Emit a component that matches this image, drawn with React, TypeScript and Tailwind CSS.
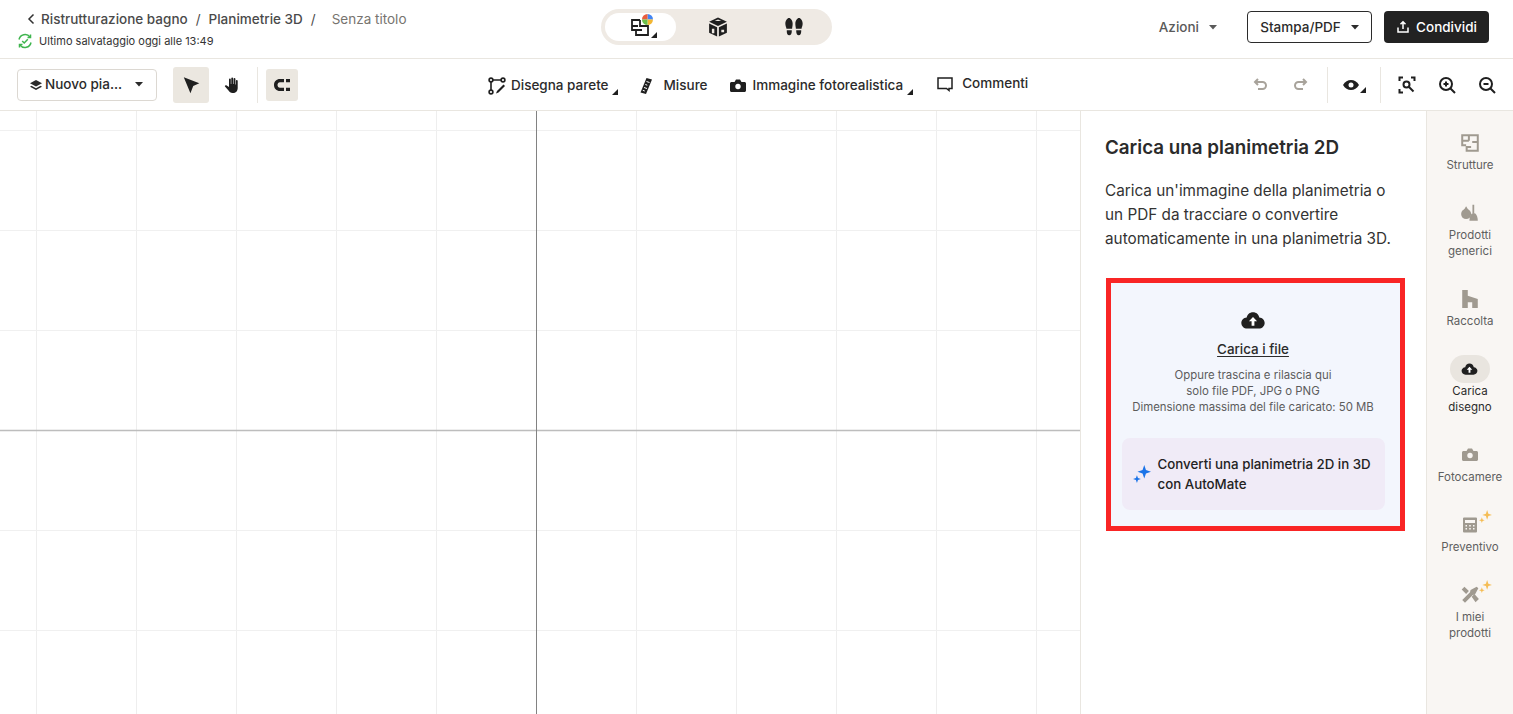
import type { ReactNode } from 'react';

const font = { fontFamily: 'Inter, "Noto Sans", sans-serif' };

function Caret({ className = '' }: { className?: string }) {
  return (
    <svg width="8" height="5" viewBox="0 0 8 5" className={className}>
      <path d="M0 0h8L4 4.5z" fill="currentColor" />
    </svg>
  );
}

function Corner({ className = '' }: { className?: string }) {
  return (
    <svg width="6" height="6" viewBox="0 0 6 6" className={className}>
      <path d="M6 0v6H0z" fill="#1f1f1f" />
    </svg>
  );
}

function Sparkle({ className = '', fill = '#f5bd55', size = 14 }: { className?: string; fill?: string; size?: number }) {
  return (
    <svg width={size} height={size} viewBox="0 0 16 16" className={className}>
      <path d="M10 0l1.500 4.500L16 6l-4.500 1.500L10 12 8.500 7.500 4 6l4.500-1.500z" fill={fill} />
      <path d="M3.500 9l.9 2.600L7 12.500l-2.600.9L3.500 16l-.9-2.600L0 12.500l2.600-.9z" fill={fill} />
    </svg>
  );
}

function CloudUp({ size = 24, fill = '#1f1f1f', arrow = '#fff' }: { size?: number; fill?: string; arrow?: string }) {
  return (
    <svg width={size} height={size} viewBox="0 0 24 24">
      <path
        d="M12 4.500c2.800 0 5 1.900 5.400 4.500 2.600.2 4.600 2.200 4.600 4.700 0 2.600-2.200 4.800-5 4.800H7c-2.800 0-5-2.200-5-4.800 0-2.500 2-4.500 4.600-4.700C7 6.400 9.200 4.500 12 4.500z"
        fill={fill}
      />
      <path d="M12 8.500l3.500 3.800h-2.300V16h-2.400v-3.700H8.500z" fill={arrow} />
    </svg>
  );
}

function PlanIcon() {
  return (
    <svg width="24" height="24" viewBox="0 0 24 24" fill="none" stroke="#1f1f1f" strokeWidth="1.800">
      <path d="M11 5H3v10h4M9 11H3M11 5v6h8v9H7v-5h6" />
    </svg>
  );
}

function ColorDot() {
  return (
    <svg width="11" height="11" viewBox="0 0 10 10" className="absolute left-[13px] -top-px">
      <path d="M5 5V0a5 5 0 0 1 5 5z" fill="#4285f4" />
      <path d="M5 5H0a5 5 0 0 1 5-5z" fill="#ea5d3d" />
      <path d="M5 5h5a5 5 0 0 1-5 5z" fill="#f2b632" />
      <path d="M5 5v5a5 5 0 0 1-5-5z" fill="#6cc04a" />
    </svg>
  );
}

function BoxIcon() {
  return (
    <svg width="20" height="20" viewBox="0 0 18 18">
      <path d="M9 .5l8 3.800L9 8 1 4.300z" fill="#1f1f1f" />
      <path d="M1 5.800L8.200 9.200V17.500L1 14.200zM17 5.800v8.400L9.800 17.500V9.200z" fill="#1f1f1f" />
      <path d="M3.500 10.500h2.200v4.200H3.500zM12 11.500h2.500v2.200H12zM6 3.500l3-1.200 3 1.200" fill="#efeae4" />
    </svg>
  );
}

function StepsIcon() {
  return (
    <svg width="20" height="20" viewBox="0 0 18 18" fill="#1f1f1f">
      <path d="M4.500 1C6 1 7.800 3.500 7.800 6c0 2-.5 3.500-.5 4.500H2.200C2.200 9.500 1.200 8 1.200 6c0-2.500 1.800-5 3.300-5zM2.500 12h4.500c.2 2.800-.7 4.500-2.300 4.500S2.300 14.800 2.500 12z" />
      <path d="M13.500 1c1.500 0 3.300 2.500 3.300 5 0 2-1 3.500-1 4.500h-5.100c0-1-.5-2.500-.5-4.500 0-2.500 1.800-5 3.300-5zM11 12h4.500c.2 2.800-.7 4.500-2.200 4.500S10.800 14.800 11 12z" />
    </svg>
  );
}

function DrawWallIcon() {
  return (
    <svg width="18" height="18" viewBox="0 0 18 18" fill="none" stroke="#1f1f1f" strokeWidth="1.600">
      <circle cx="3" cy="3" r="1.900" />
      <circle cx="15" cy="3" r="1.900" />
      <circle cx="3" cy="15" r="1.900" />
      <path d="M5 3h8M3 5v8" />
      <path d="M15.500 7.500L9 14l-1 2.500 2.500-1L17 9z" fill="#1f1f1f" stroke="none" />
    </svg>
  );
}

function RulerIcon() {
  return (
    <svg width="14" height="18" viewBox="0 0 14 18">
      <path d="M7.500 1L13 2.500 7 17l-5.500-1.500z" fill="#1f1f1f" />
      <path d="M7.500 4.500l3 1M6.300 7.500l2 .7M5 10.500l3 1M3.800 13.300l2 .7" stroke="#fff" strokeWidth="1" />
    </svg>
  );
}

function CameraIcon({ fill = '#1f1f1f', hole = '#fff' }: { fill?: string; hole?: string }) {
  return (
    <svg width="18" height="18" viewBox="0 0 18 18">
      <path d="M2.500 5h3l1.500-2.500h4L12.500 5h3c.8 0 1.500.7 1.500 1.500v7c0 .8-.7 1.500-1.500 1.500h-13C1.700 15 1 14.300 1 13.500v-7C1 5.700 1.700 5 2.500 5z" fill={fill} />
      <circle cx="9" cy="9.500" r="2.700" fill={hole} />
    </svg>
  );
}

function SideItem({ icon, label, active }: { icon: ReactNode; label: ReactNode; active?: boolean }) {
  return (
    <div className={`flex flex-col items-center text-[11.5px] leading-4 text-center ${active ? 'text-[#2b2b2b]' : 'text-[#5f5f5f]'}`}>
      <div className={`relative flex items-center justify-center h-7 w-10 rounded-full ${active ? 'bg-[#e9e5df]' : ''}`}>{icon}</div>
      <div>{label}</div>
    </div>
  );
}

const gridX = [36, 136, 236, 336, 436, 636, 736, 836, 936, 1036];
const gridY = [19, 119, 219, 419, 519];

export default function App() {
  return (
    <div style={font} className="flex flex-col h-[714px] w-[1513px] overflow-hidden bg-white text-[#2b2b2b]">
      {/* Top bar */}
      <header className="flex items-center h-[59px] shrink-0 border-b border-[#e9e6e0] pb-[4px]">
        <div className="w-[601px] shrink-0 pl-[17px] mt-[4px]">
          <div className="flex items-center pl-[10px] h-5 text-[13.5px] font-medium text-[#4a4a4a]">
            <svg width="8" height="12" viewBox="0 0 8 12" fill="none" stroke="#333" strokeWidth="1.500" className="mr-[6px]">
              <path d="M6.500 1.500L2 6l4.500 4.500" />
            </svg>
            <span>Ristrutturazione bagno</span>
            <span className="mx-[8px] font-normal">/</span>
            <span>Planimetrie 3D</span>
            <span className="ml-[8px] font-normal">/</span>
            <span className="ml-[16px] font-normal text-[#77746f]">Senza titolo</span>
          </div>
          <div className="flex items-center mt-[4px] h-4 text-[11px] text-[#333]">
            <svg width="16" height="16" viewBox="0 0 16 16" fill="none" stroke="#3fb54e" strokeWidth="1.500" className="mr-[6px]">
              <path d="M2 6.500A6.200 6.200 0 0 1 13 4M14 9.500A6.200 6.200 0 0 1 3 12" />
              <path d="M13.500 1.500V4.500H10.500M2.500 14.500V11.500H5.500" />
              <path d="M5.200 8l2 2 3.600-3.800" />
            </svg>
            Ultimo salvataggio oggi alle 13:49
          </div>
        </div>
        <div className="flex items-center w-[231px] h-9 rounded-full bg-[#efeae4] p-[4px] shrink-0">
          <div className="flex items-center justify-center w-[71px] h-[28px] rounded-full bg-white">
            <div className="relative w-[24px] h-[24px]">
              <PlanIcon />
              <ColorDot />
              <Corner className="absolute right-[-4px] bottom-[1px]" />
            </div>
          </div>
          <div className="flex items-center justify-center w-[84px]"><BoxIcon /></div>
          <div className="flex items-center justify-center w-[68px]"><StepsIcon /></div>
        </div>
        <div className="flex flex-1 items-center justify-end pr-[24px] text-[13.5px] font-medium">
          <div className="flex items-center text-[#5a5a5a] mr-[30px]">
            Azioni
            <Caret className="ml-[10px]" />
          </div>
          <div className="flex items-center justify-center w-[125px] h-8 rounded-[4px] border border-[#2b2b2b] mr-[12px]">
            Stampa/PDF
            <Caret className="ml-[10px]" />
          </div>
          <div className="flex items-center justify-center w-[105px] h-8 rounded-[4px] bg-[#222] text-white">
            <svg width="14" height="14" viewBox="0 0 14 14" fill="none" stroke="#fff" strokeWidth="1.500" className="mr-[6px]">
              <path d="M7 9V2M4.500 4.200L7 1.800l2.500 2.400M2 7.500V12h10V7.500" />
            </svg>
            Condividi
          </div>
        </div>
      </header>

      {/* Toolbar */}
      <div className="flex items-center h-[52px] shrink-0 border-b border-[#e9e6e0] pl-[17px] pr-[17px]">
        <div className="flex items-center">
          <div className="flex items-center w-[140px] h-8 rounded-[4px] border border-[#dcd8d2] pl-[11px] text-[13.5px] font-medium">
            <svg width="14" height="14" viewBox="0 0 14 14" fill="#2b2b2b" className="mr-[2px]">
              <path d="M7 2l6 3.200L7 8.400 1 5.200z" />
              <path d="M2.500 7.800L7 10.200l4.500-2.400 1.500.9L7 12 1 8.700z" />
            </svg>
            Nuovo pia...
            <Caret className="ml-[13px]" />
          </div>
          <div className="flex items-center justify-center w-9 h-9 rounded-[3px] bg-[#ebe7e0] ml-[16px]">
            <svg width="20" height="20" viewBox="0 0 18 18" fill="#1f1f1f">
              <path d="M2.500 2L16.500 7.500 11 10l-2.500 6.500z" />
            </svg>
          </div>
          <div className="flex items-center justify-center w-9 h-9 ml-[5px]">
            <svg width="18" height="18" viewBox="0 0 18 18" fill="#1f1f1f">
              <path d="M6 3.500a.9.900 0 0 1 1.800 0V8h.5V2.300a.9.900 0 0 1 1.800 0V8h.5V3a.9.900 0 0 1 1.800 0v5.500h.5V5a.9.900 0 0 1 1.800 0v7c0 3-2 5-4.700 5H9.500c-2 0-3-1-4-2.500L2 10.500c-.5-.7.500-1.800 1.300-1.200L6 11z" />
            </svg>
          </div>
          <div className="w-px h-9 bg-[#e9e6e0] ml-[7px]" />
          <div className="flex items-center justify-center w-8 h-8 rounded-[3px] bg-[#ebe7e0] ml-[8px]">
            <svg width="16" height="12" viewBox="0 0 16 12" fill="#1f1f1f">
              <path d="M10 0v3.200H6c-1.500 0-2.500 1.200-2.500 2.800S4.500 8.800 6 8.800h4V12H6C2.500 12 0 9.500 0 6s2.500-6 6-6z" />
              <path d="M12 0h4v3.200h-4zM12 8.800h4V12h-4z" />
            </svg>
          </div>
        </div>

        <div className="flex items-center ml-[190px] mt-[2px] text-[13.5px] font-medium text-[#2b2b2b]">
          <DrawWallIcon />
          <span className="ml-[5px]">Disegna parete</span>
          <Corner className="ml-[3px] mt-[12px]" />
          <span className="ml-[21px]"><RulerIcon /></span>
          <span className="ml-[11px]">Misure</span>
          <span className="ml-[21px]"><CameraIcon /></span>
          <span className="ml-[6px]">Immagine fotorealistica</span>
          <Corner className="ml-[4px] mt-[12px]" />
          <svg width="18" height="18" viewBox="0 0 18 18" fill="none" stroke="#1f1f1f" strokeWidth="1.500" className="ml-[23px] -mt-[4px]">
            <path d="M2 3h14v10.500h-3v2l-2.500-2H2z" />
          </svg>
          <span className="ml-[8px] -mt-[4px]">Commenti</span>
        </div>

        <div className="flex items-center ml-auto">
          <svg width="18" height="18" viewBox="0 0 18 18" fill="none" stroke="#a8a39b" strokeWidth="2">
            <path d="M6 3L3 6l3 3M3 6h7.500a3.500 3.500 0 0 1 0 7H6" />
          </svg>
          <svg width="18" height="18" viewBox="0 0 18 18" fill="none" stroke="#a8a39b" strokeWidth="2" className="ml-[21px]">
            <path d="M12 3l3 3-3 3M15 6H7.500a3.500 3.500 0 0 0 0 7H12" />
          </svg>
          <div className="w-px h-9 bg-[#e9e6e0] ml-[18px]" />
          <div className="relative ml-[14px] mr-[17px]">
            <svg width="18" height="18" viewBox="0 0 18 18">
              <path d="M1 9c2-3.500 4.800-5 8-5s6 1.500 8 5c-2 3.500-4.800 5-8 5s-6-1.500-8-5z" fill="#1f1f1f" />
              <circle cx="9" cy="9" r="2.500" fill="#fff" />
            </svg>
            <Corner className="absolute right-[-6px] bottom-[1px]" />
          </div>
          <div className="w-px h-9 bg-[#e9e6e0] ml-[3px]" />
          <svg width="18" height="18" viewBox="0 0 18 18" fill="none" stroke="#1f1f1f" strokeWidth="2" className="ml-[17px]">
            <path d="M1.500 5V1.500H5M13 1.500h3.500V5M1.500 13v3.500H5" />
            <circle cx="8.500" cy="8.500" r="3" />
            <path d="M11 11l4.500 4.500" />
          </svg>
          <svg width="18" height="18" viewBox="0 0 18 18" fill="none" stroke="#1f1f1f" strokeWidth="2" className="ml-[22px]">
            <circle cx="8" cy="8" r="6" />
            <path d="M12.500 12.500L17 17M5.500 8h5M8 5.500v5" />
          </svg>
          <svg width="18" height="18" viewBox="0 0 18 18" fill="none" stroke="#1f1f1f" strokeWidth="2" className="ml-[22px]">
            <circle cx="8" cy="8" r="6" />
            <path d="M12.500 12.500L17 17M5.500 8h5" />
          </svg>
        </div>
      </div>

      {/* Main */}
      <div className="flex flex-1 min-h-0">
        <div className="w-[1081px] shrink-0 border-r border-[#e9e6e0] overflow-hidden">
          <svg width="1080" height="603" className="block">
            {gridX.map(x => (
              <line key={x} x1={x + 0.5} x2={x + 0.5} y1="0" y2="603" stroke="#eeeeee" />
            ))}
            {gridY.map(y => (
              <line key={y} x1="0" x2="1080" y1={y + 0.5} y2={y + 0.5} stroke="#f0f0f0" strokeWidth="1" />
            ))}
            <line x1="0" x2="1080" y1="319.500" y2="319.500" stroke="#bdbdbd" strokeWidth="1.500" />
            <line x1="536.500" x2="536.500" y1="0" y2="603" stroke="#828282" />
          </svg>
        </div>

        <div className="w-[345px] shrink-0 pl-[24px] pr-[20px] pt-[23px]">
          <h2 className="text-[18.8px] leading-7 font-semibold text-[#2b2b2b] whitespace-nowrap">Carica una planimetria 2D</h2>
          <p className="mt-[17px] text-[15.3px] leading-6 text-[#333] whitespace-nowrap">
            Carica un'immagine della planimetria o
            <br />
            un PDF da tracciare o convertire
            <br />
            automaticamente in una planimetria 3D.
          </p>
          <div className="mt-[27px] w-[299px] h-[253px] border-[5px] border-[#f92525] bg-[#f3f6fd] flex flex-col items-center pt-[24px] pr-[5px] ml-px">
            <CloudUp size={28} />
            <div className="mt-[4px] text-[13.4px] leading-5 font-medium underline underline-offset-2">Carica i file</div>
            <div className="mt-[8px] text-[11.4px] leading-4 text-center text-[#5c5c5c] whitespace-nowrap">
              Oppure trascina e rilascia qui
              <br />
              solo file PDF, JPG o PNG
              <br />
              Dimensione massima del file caricato: 50 MB
            </div>
            <div className="flex items-center mt-[23px] w-[263px] h-[72px] rounded-lg bg-[#f0ebf7] pl-[11px]">
              <Sparkle fill="#1a73e8" size={18} />
              <div className="ml-[7px] text-[13.3px] leading-5 font-medium text-[#222] whitespace-nowrap">
                Converti una planimetria 2D in 3D
                <br />
                con AutoMate
              </div>
            </div>
          </div>
        </div>

        <div className="flex flex-1 flex-col items-center gap-[26px] border-l border-[#e9e6e0] bg-[#f9f6f3] pt-[18px]">
          <SideItem
            label="Strutture"
            icon={
              <svg width="20" height="20" viewBox="0 0 18 18" fill="none" stroke="#a09a90" strokeWidth="1.800">
                <path d="M8 2H2v9h3.500M8 7H2M8 2v5M8 2h8v14H6v-3.500h4M11 8h5" />
              </svg>
            }
          />
          <SideItem
            label={<>Prodotti<br />generici</>}
            icon={
              <svg width="20" height="20" viewBox="0 0 18 18" fill="#a09a90">
                <circle cx="5.500" cy="10" r="4.500" />
                <path d="M5.500 3l2.500 4h-5zM11.200 1.500h1.600V9h-1.600z" />
                <path d="M8.500 16c0-4 1.500-7 3.700-7s3.800 3 3.800 7z" />
              </svg>
            }
          />
          <SideItem
            label="Raccolta"
            icon={
              <svg width="20" height="20" viewBox="0 0 18 18" fill="#a09a90">
                <path d="M2 1h5v5l9 3v8h-5v-5H7v5H2z" />
              </svg>
            }
          />
          <SideItem active label={<>Carica<br />disegno</>} icon={<CloudUp size={19} />} />
          <SideItem label="Fotocamere" icon={<CameraIcon fill="#a09a90" hole="#f9f6f3" />} />
          <SideItem
            label="Preventivo"
            icon={
              <>
                <svg width="18" height="18" viewBox="0 0 18 18" fill="#a09a90">
                  <path d="M3 1.500h12a1 1 0 0 1 1 1v13a1 1 0 0 1-1 1H3a1 1 0 0 1-1-1v-13a1 1 0 0 1 1-1zM4 4v3h10V4zM4.500 9v1.500H6V9zm3.700 0v1.500h1.600V9zM12 9v1.500h1.500V9zm-7.500 3v1.500H6V12zm3.700 0v1.500h1.600V12zM12 12v1.500h1.500V12z" fillRule="evenodd" />
                </svg>
                <Sparkle className="absolute left-[29px] -top-[1px]" size={13} />
              </>
            }
          />
          <SideItem
            label={<>I miei<br />prodotti</>}
            icon={
              <>
                <svg width="20" height="20" viewBox="0 0 18 18" fill="#a09a90">
                  <path d="M15 1.500l1.500 1.500-3 5.500-2 .5-7 7-2.500-2.500 7-7 .5-2z" />
                  <path d="M1.500 4L4 1.500l4 4-2.500 2.500zM10.500 10.500L13 8l4 4.500-3 3z" />
                </svg>
                <Sparkle className="absolute left-[29px] -top-[1px]" size={13} />
              </>
            }
          />
        </div>
      </div>
    </div>
  );
}
